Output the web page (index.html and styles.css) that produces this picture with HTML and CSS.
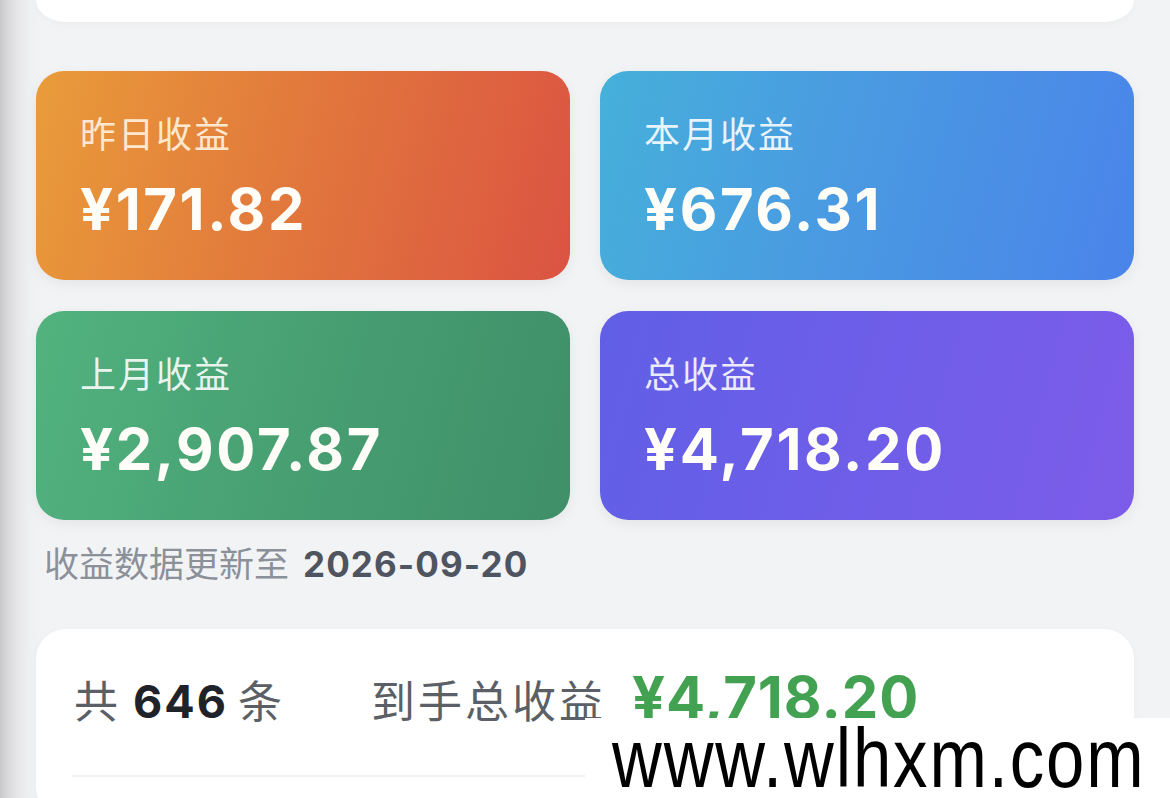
FILE: index.html
```html
<!DOCTYPE html>
<html lang="zh-CN">
<head>
<meta charset="utf-8">
<title>收益</title>
<link rel="stylesheet" href="styles.css">
</head>
<body>
<div class="page">
  <div class="top-card"></div>
  <div class="stats">
    <div class="stat orange">
      <div class="stat-label">昨日收益</div>
      <div class="stat-value">¥171.82</div>
    </div>
    <div class="stat blue">
      <div class="stat-label">本月收益</div>
      <div class="stat-value">¥676.31</div>
    </div>
    <div class="stat green">
      <div class="stat-label">上月收益</div>
      <div class="stat-value">¥2,907.87</div>
    </div>
    <div class="stat purple">
      <div class="stat-label">总收益</div>
      <div class="stat-value">¥4,718.20</div>
    </div>
  </div>
  <div class="updated">收益数据更新至<b class="updated-date">2026-09-20</b></div>
  <div class="summary">
    <div class="summary-row">
      <span class="count">共<b class="count-num">646</b>条</span>
      <span class="total-label">到手总收益</span>
      <span class="total-value">¥4,718.20</span>
    </div>
    <div class="divider"></div>
  </div>
</div>
<div class="watermark"><span class="watermark-text">www.wlhxm.com</span></div>
</body>
</html>
```
FILE: styles.css
```css
html, body {
  margin: 0;
  padding: 0;
}
body {
  width: 1170px;
  height: 798px;
  overflow: hidden;
  position: relative;
  background: linear-gradient(90deg, #c8c8ca 0px, #d9d9db 8px, #e7e7e9 18px, #eff0f2 30px, #f2f3f5 44px, #f2f3f5 100%);
  font-family: "Noto Sans CJK SC", "Noto Sans", sans-serif;
}
.page {
  padding: 0 36px;
  display: flex;
  flex-direction: column;
}
.top-card {
  height: 22px;
  background: #fff;
  border-bottom-left-radius: 30px 22px;
  border-bottom-right-radius: 30px 22px;
  box-shadow: 0 2px 8px rgba(0, 0, 0, 0.03);
}
.stats {
  margin-top: 49px;
  display: grid;
  grid-template-columns: 534px 534px;
  grid-template-rows: 209px 209px;
  column-gap: 30px;
  row-gap: 31px;
}
.stat {
  border-radius: 28px;
  padding: 39px 44px 0;
  box-sizing: border-box;
  color: #fff;
  box-shadow: 0 4px 14px rgba(0, 0, 0, 0.06);
}
.stat.orange {
  background: linear-gradient(105deg, #e99c3a 0%, #e27a3c 45%, #db5342 100%);
}
.stat.blue {
  background: linear-gradient(105deg, #46b0da 0%, #4a98e2 50%, #4a84ea 100%);
}
.stat.green {
  background: linear-gradient(105deg, #52b37f 0%, #479f72 50%, #3f8f68 100%);
}
.stat.purple {
  background: linear-gradient(105deg, #615fe6 0%, #6e5ee8 50%, #7c5ce9 100%);
}
.stat-label {
  font-size: 36px;
  line-height: 44px;
  letter-spacing: 2px;
  color: rgba(255, 255, 255, 0.88);
}
.stat.orange .stat-label {
  color: #fde8cf;
}
.stat-value {
  margin-top: 23px;
  font-family: "Inter", "Liberation Sans", sans-serif;
  font-weight: 700;
  font-size: 58px;
  line-height: 64px;
  letter-spacing: 2.6px;
  color: #fffdf8;
}
.updated {
  margin-top: 20px;
  padding-left: 8px;
  font-size: 35px;
  line-height: 44px;
  color: #8b9099;
}
.updated-date {
  margin-left: 14px;
  font-family: "Inter", "Liberation Sans", sans-serif;
  font-weight: 700;
  font-size: 35px;
  color: #4e5561;
  letter-spacing: 1.1px;
}
.summary {
  margin-top: 43px;
  background: #fff;
  border-radius: 30px;
  padding: 40px 36px 40px;
  box-shadow: 0 2px 10px rgba(0, 0, 0, 0.03);
}
.summary-row {
  display: flex;
  align-items: baseline;
  height: 56px;
}
.count {
  padding-left: 2px;
  font-size: 44px;
  line-height: 56px;
  color: #5b5f66;
}
.count-num {
  margin: 0 10px 0 15px;
  font-family: "Inter", "Liberation Sans", sans-serif;
  font-weight: 700;
  font-size: 45px;
  color: #1f2329;
  letter-spacing: 2px;
}
.total-label {
  margin-left: 89px;
  font-size: 44px;
  line-height: 56px;
  letter-spacing: 3px;
  color: #5b5f66;
}
.total-value {
  margin-left: 26px;
  font-family: "Inter", "Liberation Sans", sans-serif;
  font-weight: 700;
  font-size: 58px;
  line-height: 56px;
  letter-spacing: 1px;
  color: #43a152;
}
.divider {
  margin-top: 50px;
  height: 2px;
  background: #eeeff1;
}
.watermark {
  position: absolute;
  left: 585px;
  top: 718px;
  width: 585px;
  height: 80px;
  background: #fff;
  overflow: hidden;
  padding-left: 27px;
  box-sizing: border-box;
}
.watermark-text {
  display: inline-block;
  color: #000;
  font-family: "Liberation Sans", sans-serif;
  font-size: 84px;
  line-height: 80px;
  letter-spacing: 2.3px;
  white-space: nowrap;
  transform: scaleX(0.82);
  transform-origin: 0 50%;
}
```
